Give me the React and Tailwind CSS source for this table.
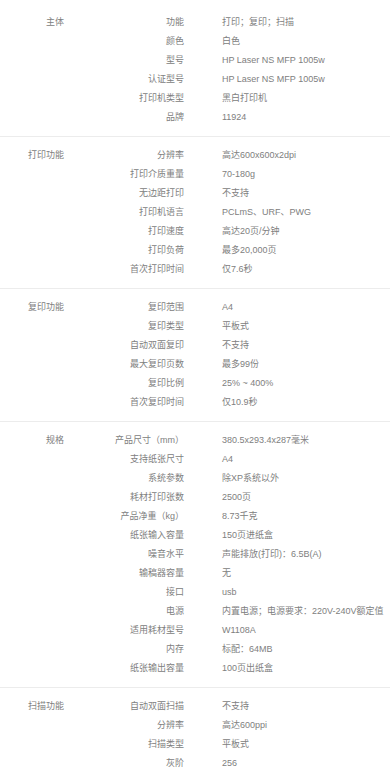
const sections = [
  {
    name: "主体",
    rows: [
      ["功能", "打印；复印；扫描"],
      ["颜色", "白色"],
      ["型号", "HP Laser NS MFP 1005w"],
      ["认证型号", "HP Laser NS MFP 1005w"],
      ["打印机类型", "黑白打印机"],
      ["品牌", "11924"],
    ],
  },
  {
    name: "打印功能",
    rows: [
      ["分辨率", "高达600x600x2dpi"],
      ["打印介质重量", "70-180g"],
      ["无边距打印", "不支持"],
      ["打印机语言", "PCLmS、URF、PWG"],
      ["打印速度", "高达20页/分钟"],
      ["打印负荷", "最多20,000页"],
      ["首次打印时间", "仅7.6秒"],
    ],
  },
  {
    name: "复印功能",
    rows: [
      ["复印范围", "A4"],
      ["复印类型", "平板式"],
      ["自动双面复印", "不支持"],
      ["最大复印页数", "最多99份"],
      ["复印比例", "25% ~ 400%"],
      ["首次复印时间", "仅10.9秒"],
    ],
  },
  {
    name: "规格",
    rows: [
      ["产品尺寸（mm）", "380.5x293.4x287毫米"],
      ["支持纸张尺寸", "A4"],
      ["系统参数", "除XP系统以外"],
      ["耗材打印张数", "2500页"],
      ["产品净重（kg）", "8.73千克"],
      ["纸张输入容量", "150页进纸盒"],
      ["噪音水平", "声能排放(打印)：6.5B(A)"],
      ["输稿器容量", "无"],
      ["接口", "usb"],
      ["电源", "内置电源；电源要求：220V-240V额定值"],
      ["适用耗材型号", "W1108A"],
      ["内存", "标配：64MB"],
      ["纸张输出容量", "100页出纸盒"],
    ],
  },
  {
    name: "扫描功能",
    rows: [
      ["自动双面扫描", "不支持"],
      ["分辨率", "高达600ppi"],
      ["扫描类型", "平板式"],
      ["灰阶", "256"],
    ],
  },
];

export default function App() {
  return (
    <div
      className="min-h-screen bg-white pt-[4px] text-[9px] leading-[19px] text-[#808080]"
      style={{ fontFamily: '"Liberation Sans", "Noto Sans CJK SC", sans-serif' }}
    >
      {sections.map((section) => (
        <div key={section.name} className="flex border-b border-[#ececec] py-[9px]">
          <div className="w-[64px] shrink-0 text-right">{section.name}</div>
          <div className="flex-1">
            {section.rows.map(([label, value]) => (
              <div key={label} className="flex whitespace-nowrap">
                <div className="w-[120px] shrink-0 text-right">{label}</div>
                <div className="pl-[38px]">{value}</div>
              </div>
            ))}
          </div>
        </div>
      ))}
    </div>
  );
}
